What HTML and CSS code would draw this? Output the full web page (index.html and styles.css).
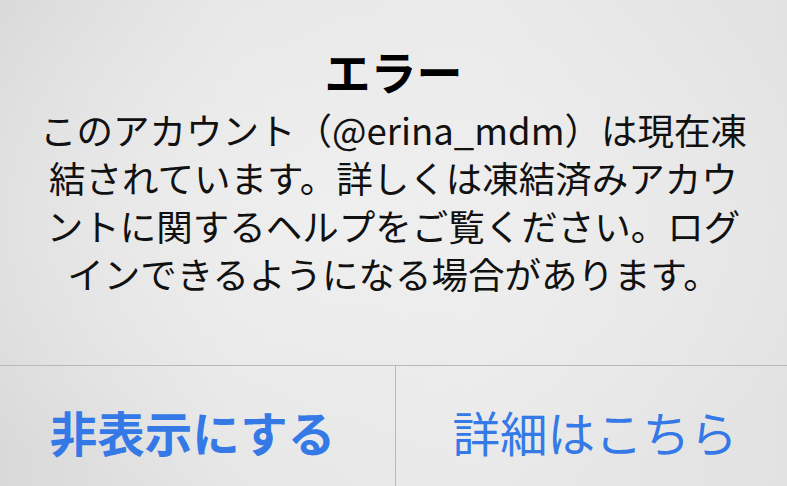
FILE: index.html
```html
<!DOCTYPE html>
<html lang="ja">
<head>
<meta charset="utf-8">
<title>エラー</title>
<link rel="stylesheet" href="styles.css">
</head>
<body>
<div class="alert">
  <div class="alert-content">
    <h1 class="alert-title">エラー</h1>
    <p class="alert-message">このアカウント（@erina_mdm）は現在凍<br>結されています。詳しくは凍結済みアカウ<br>ントに関するヘルプをご覧ください。ログ<br>インできるようになる場合があります。</p>
  </div>
  <div class="alert-actions">
    <button class="alert-button alert-button-primary">非表示にする</button>
    <button class="alert-button alert-button-secondary">詳細はこちら</button>
  </div>
</div>
</body>
</html>
```
FILE: styles.css
```css
html, body {
  margin: 0;
  padding: 0;
}

body {
  width: 787px;
  height: 486px;
  overflow: hidden;
  font-family: "Noto Sans CJK JP", "Noto Sans", sans-serif;
}

.alert {
  width: 787px;
  height: 486px;
  display: flex;
  flex-direction: column;
  background:
    radial-gradient(ellipse 70% 60% at 45% 45%, rgba(240,240,240,0.9), rgba(240,240,240,0) 100%),
    linear-gradient(90deg, #d9d9d9 0%, #e6e6e6 30%, #e9e9e9 60%, #e2e2e2 100%);
}

.alert-content {
  height: 365px;
  box-sizing: border-box;
  padding-top: 40px;
  text-align: center;
  color: #000;
}

.alert-title {
  margin: 0;
  font-size: 46px;
  font-weight: 700;
  line-height: 60px;
}

.alert-message {
  margin: 6px 0 0;
  font-size: 36.5px;
  font-weight: 400;
  line-height: 48px;
  color: #111;
  white-space: nowrap;
}

.alert-actions {
  flex: 1;
  display: grid;
  grid-template-columns: 396px 1fr;
  border-top: 1px solid #b9b9b9;
}

.alert-button {
  border: 0;
  margin: 0;
  padding: 10px 0 0;
  background: transparent;
  font-family: inherit;
  font-size: 47.5px;
  font-weight: 400;
  color: #3479e6;
  display: flex;
  align-items: center;
  justify-content: center;
}

.alert-button-primary {
  font-weight: 700;
  padding-right: 10px;
  border-right: 1px solid #b9b9b9;
}

.alert-button-secondary {
  padding-left: 7px;
}
```
